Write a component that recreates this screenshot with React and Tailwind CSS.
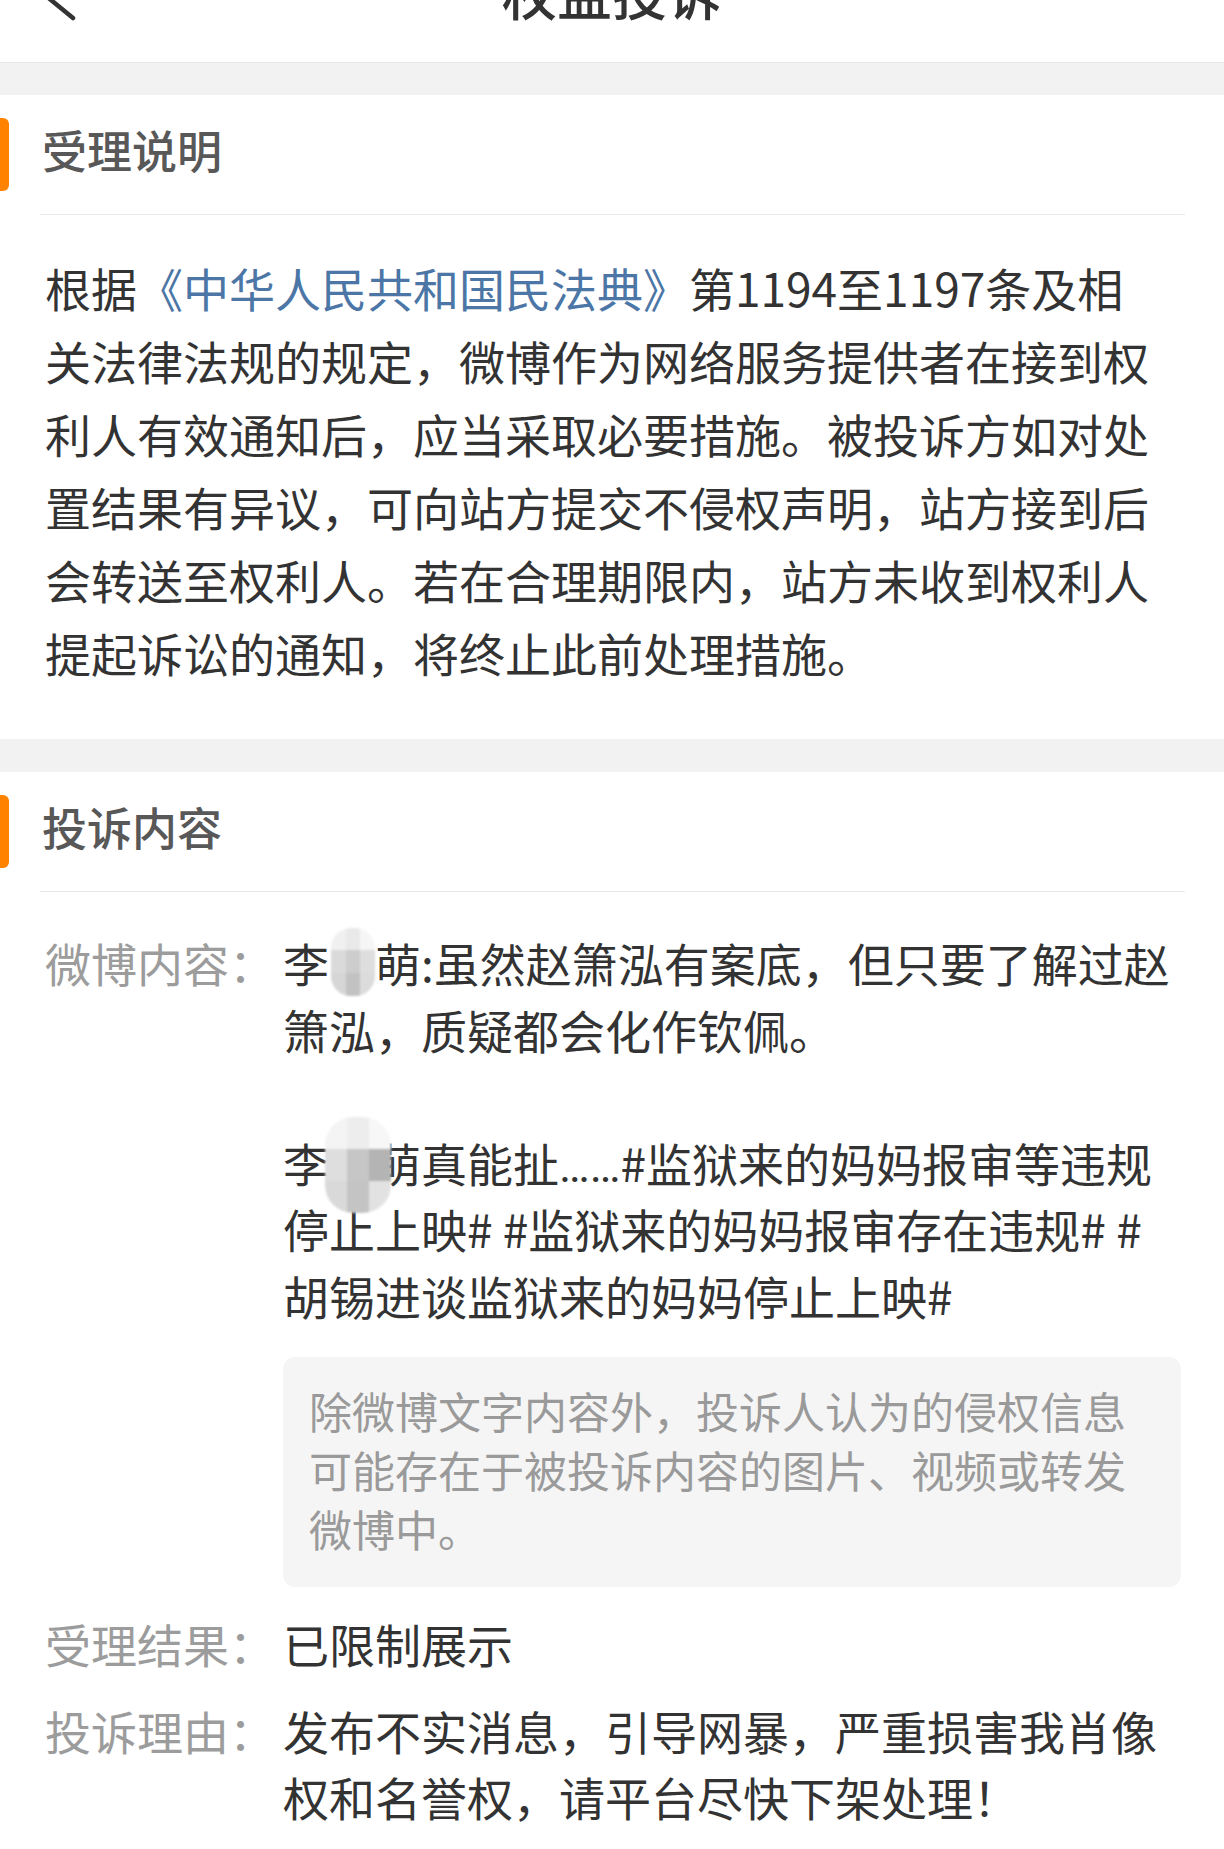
import React from "react"

const notice = [
  null,
  "关法律法规的规定，微博作为网络服务提供者在接到权",
  "利人有效通知后，应当采取必要措施。被投诉方如对处",
  "置结果有异议，可向站方提交不侵权声明，站方接到后",
  "会转送至权利人。若在合理期限内，站方未收到权利人",
  "提起诉讼的通知，将终止此前处理措施。",
]

function Blur({ wide }) {
  // mosaic over the hidden name character
  const cells = wide
    ? ["#f4f4f4", "#ededed", "#f7f7f7", "#dedede", "#c6c6c6", "#b4b4b4", "#d9d9d9", "#c4c4c4", "#e2e2e2"]
    : ["#f0f0f0", "#e9e9e9", "#f6f6f6", "#dadada", "#cdcdcd", "#dedede", "#d6d6d6", "#c2c2c2", "#dcdcdc"]
  return (
    <span className="relative inline-block w-[1em] h-[1em] leading-none align-[-0.12em]">
      <span
        className={
          wide
            ? "absolute -left-[4px] -top-[24px] w-[66px] h-[96px] rounded-[28px] overflow-hidden grid grid-cols-3 grid-rows-3 blur-[0.8px]"
            : "absolute left-[2px] -top-[14px] w-[44px] h-[68px] rounded-[20px] overflow-hidden grid grid-cols-3 grid-rows-3 blur-[0.8px]"
        }
      >
        {cells.map((c, i) => (
          <span key={i} style={{ background: c }} />
        ))}
      </span>
    </span>
  )
}

function SectionHead({ title }) {
  return (
    <>
      <div className="flex items-center h-[119px]">
        <div className="w-[9px] h-[73px] bg-[#ff8200] rounded-r-[6px]" />
        <h2 className="ml-[33px] pb-[10px] text-[45px] font-medium text-[#585858] leading-none">{title}</h2>
      </div>
      <div className="ml-[40px] mr-[39px] h-px bg-[#e8e8e8]" />
    </>
  )
}

function Row({ label, children, className = "" }) {
  return (
    <div className={"flex pl-[45px] pr-[43px] " + className}>
      <div className="w-[238px] shrink-0 text-[46px] leading-[66.5px] text-[#9c9c9c]">{label}</div>
      <div className="flex-1 min-w-0 text-[46px] leading-[66.5px] text-[#333]">{children}</div>
    </div>
  )
}

export default function App() {
  return (
    <div className="min-h-[1849px] bg-white font-['Noto_Sans_CJK_SC',sans-serif]">
      {/* top bar, scrolled partly out of view */}
      <header className="relative h-[63px] bg-white border-b border-[#e6e6e6] overflow-hidden">
        <div className="-mt-[36px] text-center text-[55px] leading-[55px] font-medium text-[#333]">权益投诉</div>
        <svg className="absolute left-[30px] -top-[50px]" width="60" height="75" viewBox="0 0 60 75" fill="none">
          <polyline points="43,14 10,41 43,68" stroke="#333" strokeWidth="4.5" strokeLinecap="round" strokeLinejoin="round" />
        </svg>
      </header>

      <div className="h-[32px] bg-[#f2f2f2]" />

      <section>
        <SectionHead title="受理说明" />
        <div className="pl-[45px] pt-[36px] pb-[50px] text-[46px] leading-[73px] text-[#333]">
          {notice.map((line, i) =>
            i === 0 ? (
              <div key={i} className="whitespace-nowrap">
                根据<span className="text-[#4b76a6]">《中华人民共和国民法典》</span>第1194至1197条及相
              </div>
            ) : (
              <div key={i} className="whitespace-nowrap">{line}</div>
            )
          )}
        </div>
      </section>

      <div className="h-[33px] bg-[#f2f2f2]" />

      <section className="pb-[40px]">
        <SectionHead title="投诉内容" />
        <div className="pt-[37px]">
          <Row label="微博内容：">
            <div className="whitespace-nowrap">李<Blur />萌:虽然赵箫泓有案底，但只要了解过赵</div>
            <div className="whitespace-nowrap">箫泓，质疑都会化作钦佩。</div>
            <div className="h-[66.5px]" />
            <div className="whitespace-nowrap h-[66.5px]">
              李<Blur wide />萌真能扯<span className="font-['Roboto',sans-serif] leading-none">……</span>#监狱来的妈妈报审等违规
            </div>
            <div className="whitespace-nowrap">停止上映# #监狱来的妈妈报审存在违规# #</div>
            <div className="whitespace-nowrap">胡锡进谈监狱来的妈妈停止上映#</div>
            <div className="mt-[29px] rounded-[12px] bg-[#f5f5f5] pl-[26px] pt-[24px] pb-[29px] text-[43px] leading-[59px] text-[#9a9a9a]">
              <div className="whitespace-nowrap">除微博文字内容外，投诉人认为的侵权信息</div>
              <div className="whitespace-nowrap">可能存在于被投诉内容的图片、视频或转发</div>
              <div className="whitespace-nowrap">微博中。</div>
            </div>
          </Row>
          <Row label="受理结果：" className="mt-[23px]">
            已限制展示
          </Row>
          <Row label="投诉理由：" className="mt-[20px]">
            <div className="whitespace-nowrap">发布不实消息，引导网暴，严重损害我肖像</div>
            <div className="whitespace-nowrap">权和名誉权，请平台尽快下架处理！</div>
          </Row>
        </div>
      </section>
    </div>
  )
}
